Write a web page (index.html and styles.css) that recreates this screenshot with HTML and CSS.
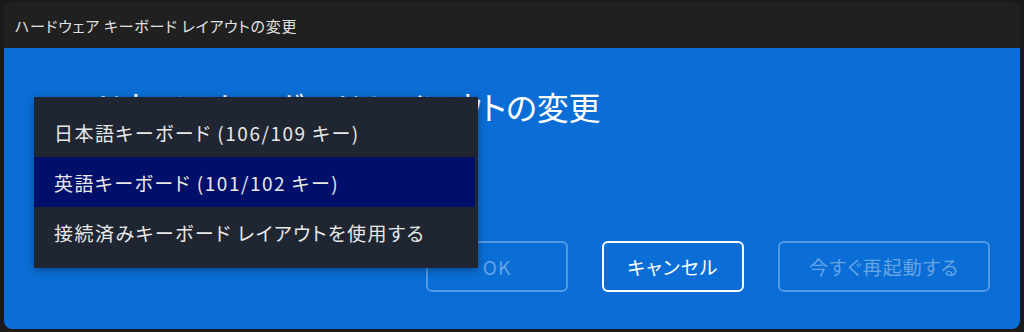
FILE: index.html
```html
<!DOCTYPE html>
<html lang="ja">
<head>
    <meta charset="UTF-8">
    <meta name="viewport" content="width=device-width, initial-scale=1.0">
    <title>ハードウェア キーボード レイアウトの変更</title>
    <link rel="stylesheet" href="styles.css">
</head>
<body>
    <div class="window">
        <div class="titlebar">ハードウェア キーボード レイアウトの変更</div>
        <div class="content">
            <h1 class="heading">ハードウェア キーボード レイアウトの変更</h1>

            <div class="buttons">
                <button class="btn disabled" type="button">OK</button>
                <button class="btn focus" type="button">キャンセル</button>
                <button class="btn disabled wide" type="button">今すぐ再起動する</button>
            </div>

            <ul class="dropdown">
                <li class="option">日本語キーボード (106/109 キー)</li>
                <li class="option selected">英語キーボード (101/102 キー)</li>
                <li class="option">接続済みキーボード レイアウトを使用する</li>
            </ul>
        </div>
    </div>
</body>
</html>
```

FILE: styles.css
```css
html, body {
    margin: 0;
    height: 100%;
}
body {
    background-color: #1a1a1a;
    font-family: "Noto Sans CJK JP", "Noto Sans", sans-serif;
    font-feature-settings: "palt";
    color: #fff;
    overflow: hidden;
}
.window {
    margin: 2px 4px 0 4px;
    height: 327px;
    border-radius: 8px;
    overflow: hidden;
    display: flex;
    flex-direction: column;
}
.titlebar {
    height: 46px;
    flex-shrink: 0;
    background-color: #202020;
    color: #e2e2e2;
    font-size: 15px;
    letter-spacing: 0.7px;
    display: flex;
    align-items: center;
    padding-left: 11px;
}
.content {
    flex: 1;
    background-color: #0a6ed6;
    position: relative;
    display: flex;
    flex-direction: column;
    padding: 0 30px 37px 30px;
}
.heading {
    margin: 36px 0 0 0;
    font-size: 32px;
    font-weight: 400;
    line-height: 44px;
    letter-spacing: -0.2px;
}
.buttons {
    margin-top: auto;
    display: flex;
    justify-content: flex-end;
    gap: 34px;
}
.btn {
    font-family: inherit;
    font-feature-settings: "palt";
    font-size: 19px;
    letter-spacing: 1px;
    height: 51px;
    width: 142px;
    border-radius: 6px;
    background: transparent;
    padding: 0;
}
.btn.wide {
    width: 212px;
}
.btn.disabled {
    border: 2px solid rgba(255, 255, 255, 0.3);
    color: rgba(255, 255, 255, 0.38);
}
.btn.focus {
    border: 2px solid #fff;
    color: #fff;
}
.dropdown {
    position: absolute;
    left: 30px;
    top: 49px;
    width: 444px;
    margin: 0;
    padding: 10px 0 11px 0;
    list-style: none;
    background-color: #1f2631;
    box-shadow: 0 2px 8px rgba(0, 0, 0, 0.35);
}
.option {
    height: 50px;
    display: flex;
    align-items: center;
    padding-left: 20px;
    font-size: 19px;
    letter-spacing: 1.5px;
    color: #e8e8e8;
}
.option.selected {
    background-color: #00106a;
    margin-right: 3px;
}
```
